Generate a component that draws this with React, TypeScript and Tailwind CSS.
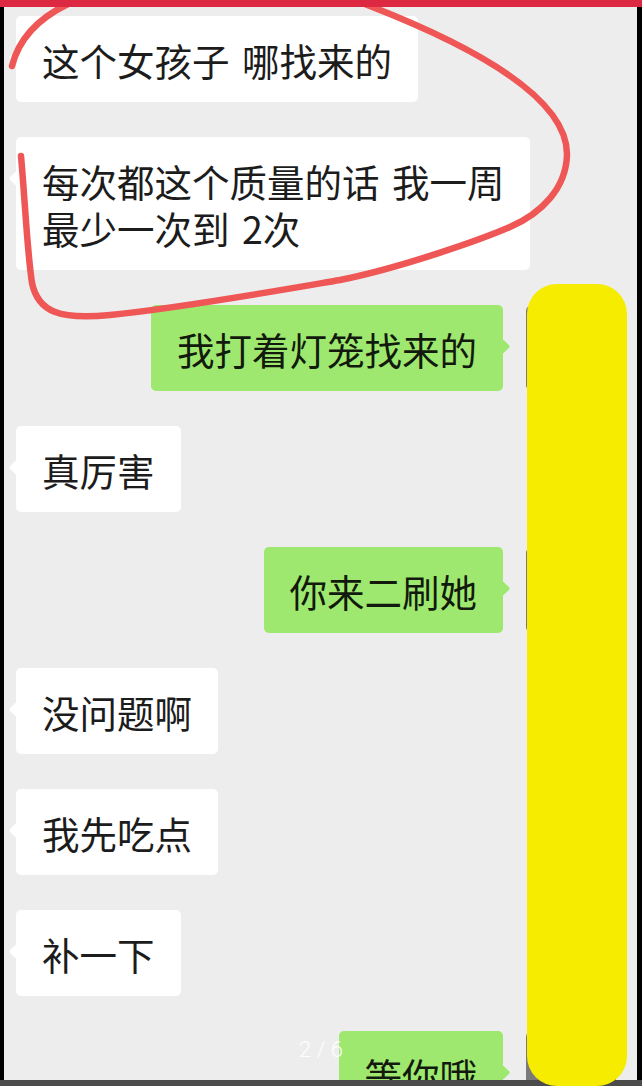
import React from 'react';

type Msg = { id: number; side: 'left' | 'right'; lines: string[] };

const messages: Msg[] = [
  { id: 1, side: 'left', lines: ['这个女孩子 哪找来的'] },
  { id: 2, side: 'left', lines: ['每次都这个质量的话 我一周', '最少一次到 2次'] },
  { id: 3, side: 'right', lines: ['我打着灯笼找来的'] },
  { id: 4, side: 'left', lines: ['真厉害'] },
  { id: 5, side: 'right', lines: ['你来二刷她'] },
  { id: 6, side: 'left', lines: ['没问题啊'] },
  { id: 7, side: 'left', lines: ['我先吃点'] },
  { id: 8, side: 'left', lines: ['补一下'] },
  { id: 9, side: 'right', lines: ['等你哦'] },
];

const Bubble: React.FC<{ msg: Msg }> = ({ msg }) => {
  const isRight = msg.side === 'right';
  return (
    <div
      className={`relative rounded-[5px] px-[26px] py-[19.5px] text-[37.5px] leading-[47px] whitespace-nowrap [word-spacing:4px] ${
        isRight ? 'bg-[#9fe870] text-[#111a0c]' : 'bg-white text-[#1c1c1c]'
      }`}
    >
      {/* tail */}
      <span
        className={`absolute top-[36px] w-[11px] h-[11px] rotate-45 rounded-[2px] ${
          isRight ? 'right-[-5px] bg-[#9fe870]' : 'left-[-5px] bg-white'
        }`}
      />
      <span className="relative">
        {msg.lines.map((l, i) => (
          <React.Fragment key={i}>
            {i > 0 && <br />}
            {l}
          </React.Fragment>
        ))}
      </span>
    </div>
  );
};

const App: React.FC = () => {
  return (
    <div className="relative w-[642px] h-[1086px] overflow-hidden flex flex-col bg-black font-['Noto_Sans_CJK_SC','Noto_Sans',sans-serif]">
      {/* chat area */}
      <div className="h-[7px] shrink-0" />
      <div className="flex-1 min-h-0 overflow-hidden bg-[#ededed] border-l-[4px] border-r-[5px] border-black">
        <div className="flex flex-col gap-[35px] pt-[9px]">
          {messages.map(msg =>
            msg.side === 'left' ? (
              <div key={msg.id} className="flex justify-start pl-[12px]">
                <Bubble msg={msg} />
              </div>
            ) : (
              <div key={msg.id} className="flex justify-end items-start gap-[23px] pr-[21px]">
                <Bubble msg={msg} />
                <div className="w-[90px] h-[86px] shrink-0 rounded-[6px] bg-[#7a7a7a]" />
              </div>
            )
          )}
        </div>
      </div>
      <div className="h-[6px] shrink-0 bg-[#4b4b4b]" />

      {/* red hand-drawn circle */}
      <svg
        className="absolute left-0 top-0 pointer-events-none"
        width="642"
        height="1086"
        viewBox="0 0 642 1086"
        fill="none"
      >
        <path
          d="M 12 66 C 18 42, 35 20, 68 4 C 150 -40, 300 -25, 370 6 C 452 38, 568 92, 567 155 C 566 188, 542 213, 510 227 C 480 240, 400 268, 340 280 C 270 292, 180 308, 110 315 C 60 320, 38 312, 32 283 C 27 250, 25 200, 21 156"
          stroke="#ef5656"
          strokeWidth="6.5"
          strokeLinecap="round"
          strokeLinejoin="round"
        />
      </svg>

      {/* top status bar */}
      <div className="absolute left-0 top-0 w-full h-[7px] bg-[#dc2840]" />

      {/* yellow redaction */}
      <div className="absolute left-[527px] top-[284px] w-[100px] h-[802px] rounded-[30px] bg-[#f6ec00]" />

      {/* page indicator */}
      <div className="absolute left-0 right-0 top-[1035px] text-center text-white/90 text-[22px] leading-[30px] font-light font-['Roboto',sans-serif]">
        2 / 6
      </div>
    </div>
  );
};

export default App;
